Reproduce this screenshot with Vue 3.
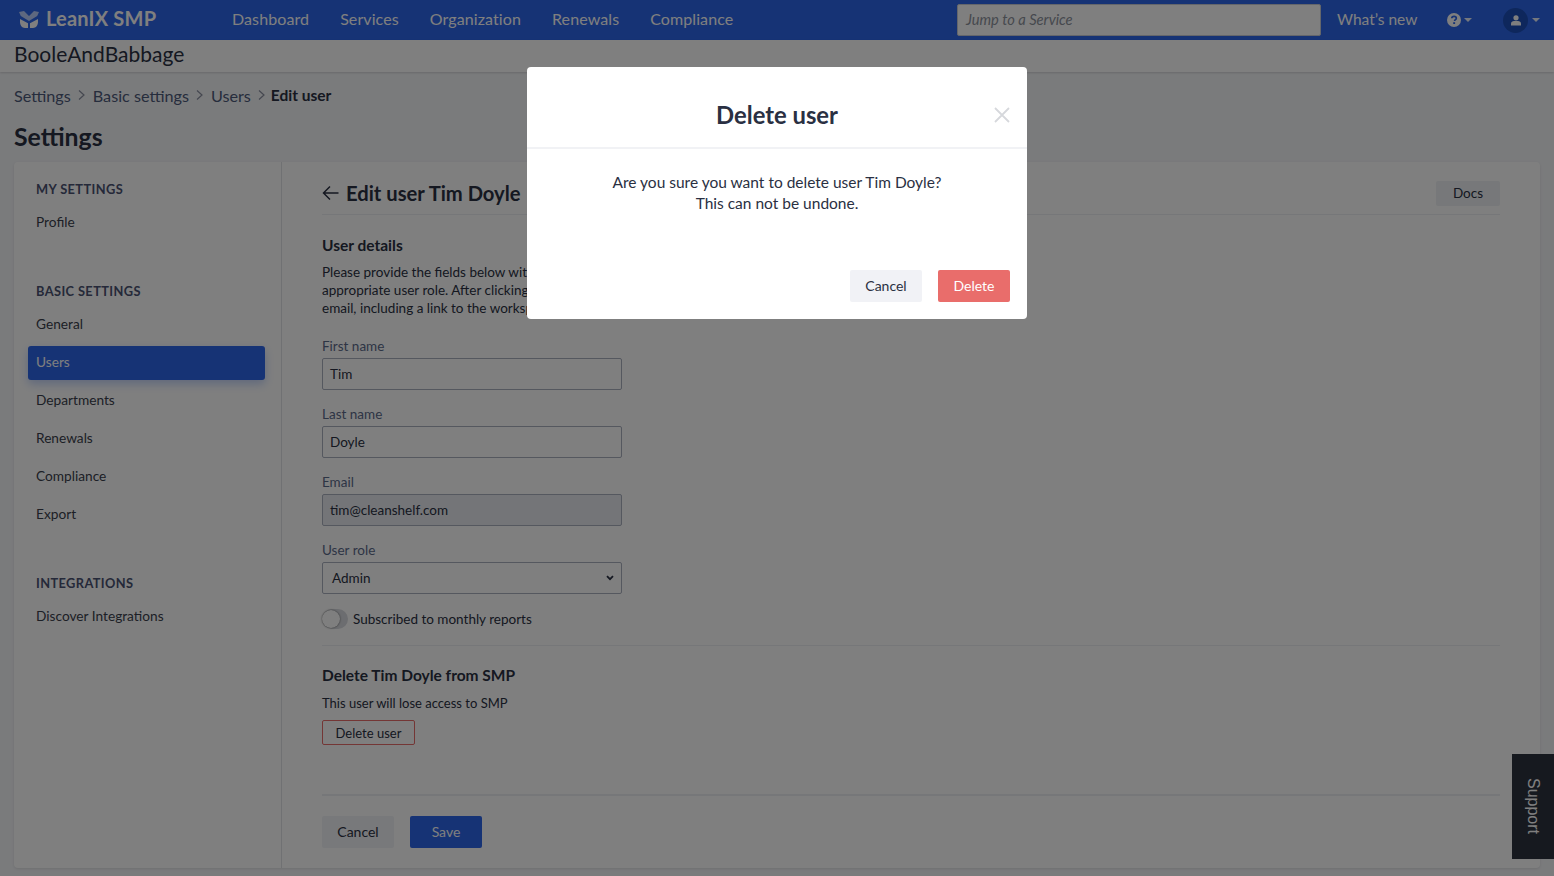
<script setup>
const navItems = ['Dashboard', 'Services', 'Organization', 'Renewals', 'Compliance']
const crumbs = ['Settings', 'Basic settings', 'Users']
const groups = [
  { title: 'MY SETTINGS', items: ['Profile'] },
  { title: 'BASIC SETTINGS', items: ['General', 'Users', 'Departments', 'Renewals', 'Compliance', 'Export'] },
  { title: 'INTEGRATIONS', items: ['Discover Integrations'] },
]
const fields = [
  { label: 'First name', value: 'Tim' },
  { label: 'Last name', value: 'Doyle' },
  { label: 'Email', value: 'tim@cleanshelf.com', disabled: true },
]
</script>

<template>
  <div class="page">
    <header class="topbar">
      <div class="brand">
        <svg class="logo" width="20" height="17" viewBox="0 0 20 17">
          <path fill="#bcd0ff" d="M0 1 5 0l5 5 5-5 5 1-1.800 4L10 10 1.800 5z" />
          <path fill="#fff" d="M1 8l8 4.200V17H6c-3 0-5-3-5-6zM19 8l-8 4.200V17h3c3 0 5-3 5-6z" />
        </svg>
        <span class="brand-name">LeanIX SMP</span>
      </div>
      <nav class="nav">
        <a v-for="item in navItems" :key="item">{{ item }}</a>
      </nav>
      <div class="top-right">
        <div class="jump">Jump to a Service</div>
        <span class="whats-new">What’s new</span>
        <span class="help">
          <svg width="14" height="14" viewBox="0 0 14 14">
            <circle cx="7" cy="7" r="7" fill="#fff" />
            <path d="M4.800 5.300c0-1.300 1-2 2.300-2s2.200.8 2.200 1.900c0 1.500-1.700 1.500-1.700 2.800" fill="none" stroke="#2c66ea" stroke-width="1.700" />
            <rect x="6.200" y="9.200" width="1.900" height="1.800" fill="#2c66ea" />
          </svg>
          <i class="caret"></i>
        </span>
        <span class="account">
          <span class="avatar">
            <svg width="10" height="11" viewBox="0 0 10 11">
              <circle cx="5" cy="2.800" r="2.600" fill="#fff" />
              <path fill="#fff" d="M0 10.500V8.600C0 7 1.500 6 3 6h4c1.500 0 3 1 3 2.600v1.900z" />
            </svg>
          </span>
          <i class="caret"></i>
        </span>
      </div>
    </header>

    <div class="org-bar">BooleAndBabbage</div>

    <main class="main">
      <div class="breadcrumb">
        <template v-for="c in crumbs" :key="c">
          <span class="crumb">{{ c }}</span>
          <svg class="chev" width="7" height="12" viewBox="0 0 7 12">
            <path d="M1 1.500 6 6l-5 4.500" fill="none" stroke="#8a90a0" stroke-width="1.200" />
          </svg>
        </template>
        <span class="crumb-current">Edit user</span>
      </div>
      <h1 class="page-title">Settings</h1>

      <section class="card">
        <aside class="sidebar">
          <div v-for="g in groups" :key="g.title" class="group">
            <h4>{{ g.title }}</h4>
            <a v-for="i in g.items" :key="i" class="side-item" :class="{ active: i === 'Users' }">{{ i }}</a>
          </div>
        </aside>

        <div class="content">
          <div class="content-head">
            <svg width="17" height="16" viewBox="0 0 17 16">
              <path d="M16.500 8H1.500M8 1.500 1.500 8 8 14.500" fill="none" stroke="#2a3042" stroke-width="1.500" />
            </svg>
            <h2>Edit user Tim Doyle</h2>
            <button class="docs">Docs</button>
          </div>

          <h3 class="sec-title">User details</h3>
          <p class="intro">Please provide the fields below with the<br />appropriate user role. After clicking save the user receives an<br />email, including a link to the workspace.</p>

          <div v-for="f in fields" :key="f.label" class="field">
            <label>{{ f.label }}</label>
            <div class="input" :class="{ disabled: f.disabled }">{{ f.value }}</div>
          </div>
          <div class="field">
            <label>User role</label>
            <div class="input select">
              <span>Admin</span>
              <svg width="8" height="6" viewBox="0 0 8 6">
                <path d="M1 1.200 4 4.200l3-3" fill="none" stroke="#2a3042" stroke-width="1.800" />
              </svg>
            </div>
          </div>

          <div class="toggle-row">
            <span class="toggle"><span class="knob"></span></span>
            <span>Subscribed to monthly reports</span>
          </div>

          <div class="delete-sec">
            <h3 class="sec-title">Delete Tim Doyle from SMP</h3>
            <p class="lose">This user will lose access to SMP</p>
            <button class="delete-outline">Delete user</button>
          </div>

          <div class="footer">
            <button class="btn btn-grey">Cancel</button>
            <button class="btn btn-blue">Save</button>
          </div>
        </div>
      </section>
    </main>

    <div class="support"><span>Support</span></div>

    <div class="overlay">
      <div class="modal">
        <div class="modal-head">
          <h2>Delete user</h2>
          <svg class="close" width="16" height="16" viewBox="0 0 16 16">
            <path d="M1 1l14 14M15 1 1 15" fill="none" stroke="#d6d8dc" stroke-width="1.800" />
          </svg>
        </div>
        <div class="modal-body">
          Are you sure you want to delete user Tim Doyle?<br />This can not be undone.
        </div>
        <div class="modal-foot">
          <button class="btn btn-light">Cancel</button>
          <button class="btn btn-red">Delete</button>
        </div>
      </div>
    </div>
  </div>
</template>

<style scoped>
.page {
  position: relative;
  height: 876px;
  overflow: hidden;
  background: #f5f6f9;
  color: #2a3042;
  font-family: Lato, "Open Sans", sans-serif;
  font-size: 14px;
}
button { font-family: inherit; cursor: pointer; }

.topbar {
  height: 40px;
  background: #2c66ea;
  display: flex;
  align-items: center;
  color: #fff;
  padding: 0 14px 0 19px;
}
.brand { display: flex; align-items: center; gap: 7px; width: 213px; }
.logo { margin-top: -2px; }
.brand-name { font-size: 20px; font-weight: 700; letter-spacing: .2px; padding-bottom: 4px; }
.nav { display: flex; gap: 31px; font-size: 16px; letter-spacing: .1px; padding-bottom: 3px; }
.top-right { margin-left: auto; display: flex; align-items: center; }
.jump {
  width: 364px;
  height: 32px;
  box-sizing: border-box;
  background: #fff;
  border: 1px solid #c8cdd6;
  border-radius: 2px;
  padding: 0 8px;
  line-height: 28px;
  font-size: 14.700px;
  font-style: italic;
  color: #8d929c;
}
.whats-new { font-size: 15.500px; margin-left: 16px; width: 110px; padding-bottom: 3px; }
.help { display: flex; align-items: center; gap: 3px; width: 56px; }
.account { display: flex; align-items: center; gap: 4px; }
.avatar {
  width: 25px;
  height: 25px;
  border-radius: 50%;
  background: #1c4fb8;
  display: flex;
  align-items: center;
  justify-content: center;
}
.caret {
  width: 0;
  height: 0;
  border-left: 4.500px solid transparent;
  border-right: 4.500px solid transparent;
  border-top: 4.500px solid #fff;
  opacity: .9;
}

.org-bar {
  height: 32px;
  line-height: 28px;
  background: #fff;
  padding-left: 14px;
  font-size: 21px;
  box-shadow: 0 1px 2px rgba(0, 0, 0, .15);
  position: relative;
}

.main { padding: 0 14px; }
.breadcrumb {
  display: flex;
  align-items: center;
  gap: 7px;
  height: 48px;
  box-sizing: border-box;
  font-size: 16.200px;
  padding-bottom: 2px;
}
.crumb { color: #4d5a7a; }
.crumb-current { font-weight: 700; font-size: 15.500px; margin-left: -2px; }
.chev { margin-right: 1px; }
.page-title { margin: 0; font-size: 24.800px; font-weight: 700; line-height: 34px; height: 42px; }

.card {
  height: 706px;
  background: #fff;
  border-radius: 4px;
  box-shadow: 0 1px 3px rgba(0, 0, 0, .1);
  display: flex;
}
.sidebar {
  width: 268px;
  box-sizing: border-box;
  border-right: 1px solid #e0e2e7;
  padding: 18px 16px 0 14px;
  flex: none;
}
.group { margin-bottom: 42px; }
.group h4 {
  margin: 0 0 7px;
  padding-left: 8px;
  font-size: 12.800px;
  line-height: 19px;
  letter-spacing: .4px;
  font-weight: 700;
  color: #4a5272;
}
.side-item {
  display: block;
  height: 34px;
  line-height: 32px;
  padding-left: 8px;
  margin-bottom: 4px;
  font-size: 13.700px;
  color: #3a3f4c;
}
.active {
  background: #2c66ea;
  color: #fff;
  border-radius: 3px;
  box-shadow: 0 4px 10px rgba(44, 102, 234, .3);
  width: 237px;
  box-sizing: border-box;
}

.content { flex: 1; padding: 0 40px; min-width: 0; display: flex; flex-direction: column; }
.content-head {
  display: flex;
  align-items: center;
  gap: 7px;
  height: 53px;
  padding-top: 10px;
  box-sizing: border-box;
  border-bottom: 1px solid #eceef2;
  margin-bottom: 20px;
}
.content-head h2 { margin: 0; padding-bottom: 1px; font-size: 20.200px; font-weight: 700; }
.docs {
  margin-left: auto;
  width: 64px;
  height: 25px;
  border: 0;
  background: #eef0f4;
  border-radius: 2px;
  color: #2a3042;
  font-size: 13.500px;
}
.sec-title { margin: 0; font-size: 15.500px; font-weight: 700; line-height: 20px; }
.intro { margin: 8px 0 7px; font-size: 13.500px; line-height: 18px; height: 54px; overflow: hidden; white-space: nowrap; }
.field { margin-top: 12px; height: 56px; }
.field label { display: block; font-size: 13.500px; line-height: 20px; color: #5b6a8a; height: 20px; }
.input {
  margin-top: 2px;
  width: 300px;
  height: 32px;
  box-sizing: border-box;
  border: 1px solid #aab0bf;
  border-radius: 2px;
  padding: 0 7px;
  line-height: 30px;
  font-size: 13.500px;
  background: #fff;
}
.disabled { background: #e9ebf0; }
.select {
  display: flex;
  align-items: center;
  justify-content: space-between;
  padding: 0 7px 0 9px;
}
.toggle-row { display: flex; align-items: center; gap: 5px; margin-top: 12px; font-size: 13.500px; height: 22px; }
.toggle {
  width: 26px;
  height: 20px;
  border-radius: 10px;
  background: #d9dbe0;
  display: block;
  position: relative;
}
.knob {
  position: absolute;
  left: 0;
  top: 1px;
  width: 18px;
  height: 18px;
  border-radius: 50%;
  background: #fff;
  box-shadow: 0 0 2px rgba(0, 0, 0, .6);
}
.delete-sec { margin-top: 15px; padding-top: 19px; border-top: 1px solid #eceef2; }
.lose { margin: 9px 0 0; font-size: 13px; line-height: 18px; }
.delete-outline {
  display: block;
  margin-top: 8px;
  width: 93px;
  height: 25px;
  padding: 0;
  background: #fff;
  border: 1px solid #e96d6b;
  border-radius: 2px;
  font-size: 13px;
  color: #2a3042;
}
.footer {
  margin-top: 49px;
  padding-top: 20px;
  border-top: 2px solid #eceef2;
  display: flex;
  gap: 16px;
}
.btn {
  width: 72px;
  height: 32px;
  border: 0;
  border-radius: 2px;
  font-size: 14px;
  padding: 0 0 2px;
}
.btn-grey, .btn-light { background: #f1f2f6; color: #2a3042; }
.btn-blue { background: #2c66ea; color: #fff; }
.btn-red { background: #e96d6b; color: #fff; }

.support {
  position: absolute;
  right: 0;
  top: 754px;
  width: 42px;
  height: 105px;
  background: #2c323e;
  color: #fff;
  display: flex;
  align-items: center;
  justify-content: center;
  font-family: "Liberation Sans", sans-serif;
  font-size: 16px;
}
.support span { writing-mode: vertical-rl; }

.overlay {
  position: absolute;
  inset: 0;
  background: rgba(0, 0, 0, .5);
}
.modal {
  position: absolute;
  left: 527px;
  top: 67px;
  width: 500px;
  height: 252px;
  background: #fff;
  border-radius: 4px;
  display: flex;
  flex-direction: column;
}
.modal-head {
  position: relative;
  height: 82px;
  box-sizing: border-box;
  border-bottom: 2px solid #f1f2f5;
  display: flex;
  align-items: center;
  justify-content: center;
  padding-top: 15px;
}
.modal-head h2 { margin: 0; font-size: 23.800px; font-weight: 700; color: #2a3042; }
.close { position: absolute; right: 17px; top: 40px; }
.modal-body {
  padding-top: 23px;
  text-align: center;
  font-size: 15.500px;
  line-height: 21px;
  color: #2a3042;
}
.modal-foot {
  margin-top: auto;
  padding: 0 17px 17px;
  display: flex;
  justify-content: flex-end;
  gap: 16px;
}
</style>

<style>
html, body { margin: 0; overflow: hidden; }
</style>
